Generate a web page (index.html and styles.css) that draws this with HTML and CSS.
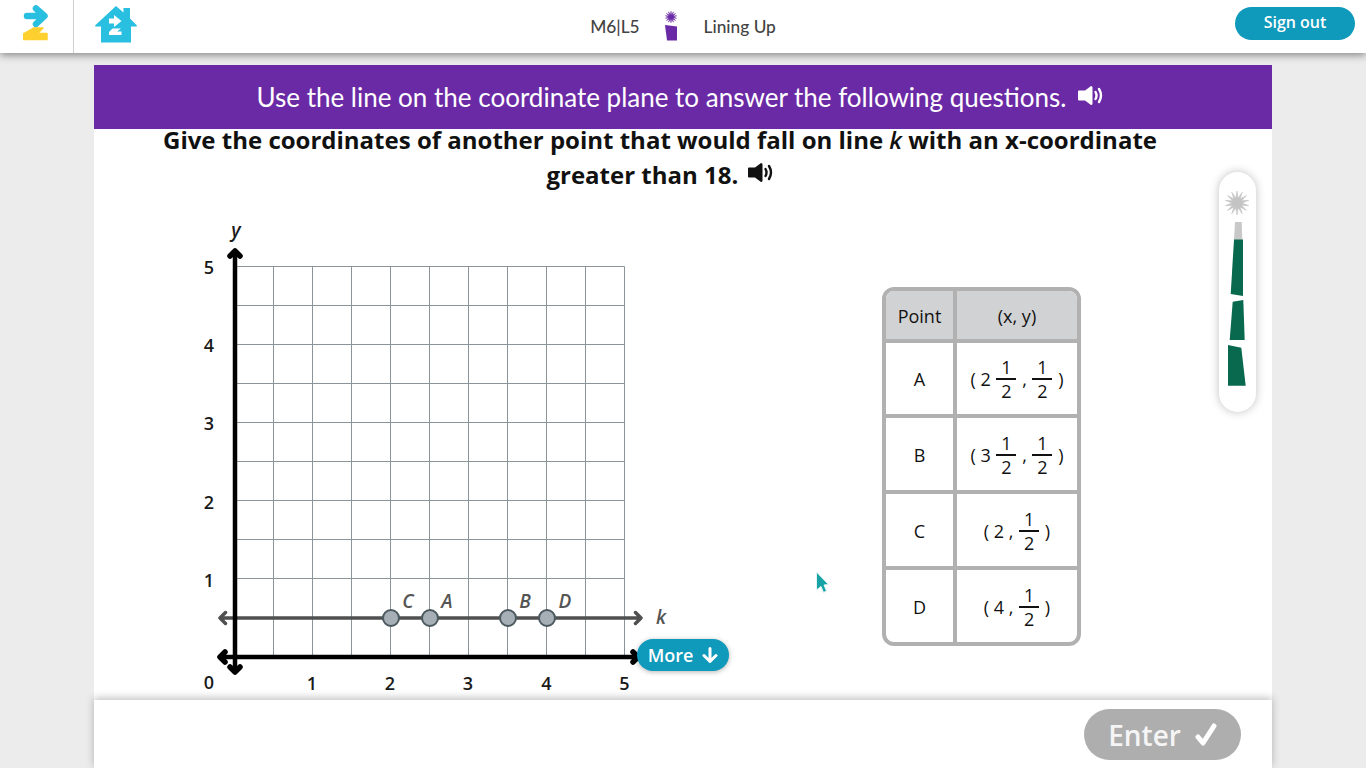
FILE: index.html
```html
<!DOCTYPE html>
<html lang="en">
  <head>
    <meta charset="UTF-8" />
    <title>Lining Up</title>
    <link rel="stylesheet" href="styles.css">
  </head>
  <body>
    <header class="topbar">
      <div class="topbar-left">
        <a class="logo-cell">
          <svg width="26" height="38" viewBox="0 0 26 38">
            <path fill="none" stroke="#29bfe0" stroke-width="6.500" stroke-linejoin="round" stroke-linecap="round" d="M13 4.500l8.500 7.500-8.500 8M4 12h16"/>
            <path fill="#fdd02f" stroke="#fdd02f" stroke-width="1.500" stroke-linejoin="round" d="M11 24h9l-5.500 5.500h9.500v6h-23.500v-5.500z"/>
          </svg>
        </a>
        <a class="home-link">
          <svg width="44" height="38" viewBox="0 0 44 38">
            <path fill="#29bfe0" d="M22 1l7.500 6.500v-4.500h6.500v10.500l7 7-.5 1h-5.500v16h-30v-16h-5.500l-.5-1z"/>
            <path fill="#fff" d="M20 10l7.500 6-7.500 6v-3.500h-5v-5h5z"/>
            <path fill="#fff" d="M18.500 23.500h8.500l-4 3h4.500v3.500h-12.500v-3z"/>
          </svg>
        </a>
      </div>
      <div class="lesson">
        <span class="lesson-code">M6|L5</span>
        <svg class="lesson-icon" width="14" height="30" viewBox="0 0 14 30">
          <polygon fill="#6b2aa5" stroke="#6b2aa5" stroke-width="1" transform="translate(7 6) scale(.48)" points="0,-12 1.110,-4.870 5.210,-10.810 3.120,-3.910 9.380,-7.480 4.500,-2.170 11.700,-2.670 5,0 11.700,2.670 4.500,2.170 9.380,7.480 3.120,3.910 5.210,10.810 1.110,4.870 0,12 -1.110,4.870 -5.210,10.810 -3.120,3.910 -9.380,7.480 -4.500,2.170 -11.700,2.670 -5,0 -11.700,-2.670 -4.500,-2.170 -9.380,-7.480 -3.120,-3.910 -5.210,-10.810 -1.110,-4.870"/>
          <path fill="#6b2aa5" d="M1 14l12 1.500v14h-10z"/>
        </svg>
        <span class="lesson-name">Lining Up</span>
      </div>
      <div class="topbar-right">
        <button type="button" class="signout">Sign out</button>
      </div>
    </header>

    <main class="sheet">
      <div class="banner">
        <span>Use the line on the coordinate plane to answer the following questions.</span>
        <svg class="speaker" width="26" height="22" viewBox="0 0 26 22">
          <path fill="currentColor" d="M1 5.500h6l6-4.500q1.500 0 1.500 1.500v16q0 1.500-1.500 1.500l-6-4.500h-6q-1 0-1-1v-8q0-1 1-1z"/>
          <path fill="none" stroke="currentColor" stroke-width="2.400" stroke-linecap="round" d="M17.500 7q2 3.500 0 7M21 4q4 6.500 0 13"/>
        </svg>
      </div>

      <div class="content">
        <h2 class="question">
          Give the coordinates of another point that would fall on line <em>k</em> with an x-coordinate greater than 18.
          <svg class="speaker" width="26" height="22" viewBox="0 0 26 22">
            <path fill="currentColor" d="M1 5.500h6l6-4.500q1.500 0 1.500 1.500v16q0 1.500-1.500 1.500l-6-4.500h-6q-1 0-1-1v-8q0-1 1-1z"/>
            <path fill="none" stroke="currentColor" stroke-width="2.400" stroke-linecap="round" d="M17.500 7q2 3.500 0 7M21 4q4 6.500 0 13"/>
          </svg>
        </h2>

        <div class="work">
          <div class="graph">
            <svg width="500" height="485" viewBox="0 0 500 485">
              <path class="grid" d="M83.500 51.500V442M122.500 51.500V442M161.500 51.500V442M200.500 51.500V442M239.500 51.500V442M278.500 51.500V442M317.500 51.500V442M356.500 51.500V442M395.500 51.500V442M434.500 51.500V442M45 51.500H434.500M45 90.500H434.500M45 129.500H434.500M45 168.500H434.500M45 207.500H434.500M45 246.500H434.500M45 285.500H434.500M45 324.500H434.500M45 363.500H434.500"/>
              <path class="line-k" d="M30 403H451M35.500 397.500l-5.500 5.500 5.500 5.500M445.500 397.500l5.500 5.500-5.500 5.500"/>
              <path class="axis" d="M45 36V457M30 442H447"/>
              <path class="axis-head" d="M40 41l5-5 5 5M40 452l5 5 5-5M35 437l-5 5 5 5M443 437l5 5-5 5"/>
              <circle class="point" cx="201" cy="403" r="8"/>
              <circle class="point" cx="240" cy="403" r="8"/>
              <circle class="point" cx="318" cy="403" r="8"/>
              <circle class="point" cx="357" cy="403" r="8"/>
              <text class="pt-label" x="218" y="393">C</text>
              <text class="pt-label" x="257" y="393">A</text>
              <text class="pt-label" x="335" y="393">B</text>
              <text class="pt-label" x="375" y="393">D</text>
              <text class="pt-label" x="471" y="409">k</text>
              <text class="var-label" x="46" y="22">y</text>
              <text class="tick" x="19" y="58.500">5</text>
              <text class="tick" x="19" y="136.500">4</text>
              <text class="tick" x="19" y="214.500">3</text>
              <text class="tick" x="19" y="294">2</text>
              <text class="tick" x="19" y="372">1</text>
              <text class="tick" x="19" y="473.500">0</text>
              <text class="tick" x="122" y="474.500">1</text>
              <text class="tick" x="200" y="474.500">2</text>
              <text class="tick" x="278" y="474.500">3</text>
              <text class="tick" x="356.500" y="474.500">4</text>
              <text class="tick" x="434.500" y="474.500">5</text>
            </svg>
            <button type="button" class="more">
              More
              <svg width="16" height="16" viewBox="0 0 16 16">
                <path fill="none" stroke="#fff" stroke-width="3" stroke-linecap="round" stroke-linejoin="round" d="M8 1.500V14M2 8.500l6 6 6-6"/>
              </svg>
            </button>
          </div>

          <table class="points">
            <tr class="head">
              <th>Point</th>
              <th>(x, y)</th>
            </tr>
            <tr>
              <td>A</td>
              <td>
                <span class="pair">( 2 <span class="frac"><i>1</i><i>2</i></span> , <span class="frac"><i>1</i><i>2</i></span> )</span>
              </td>
            </tr>
            <tr>
              <td>B</td>
              <td>
                <span class="pair">( 3 <span class="frac"><i>1</i><i>2</i></span> , <span class="frac"><i>1</i><i>2</i></span> )</span>
              </td>
            </tr>
            <tr>
              <td>C</td>
              <td>
                <span class="pair">( 2 , <span class="frac"><i>1</i><i>2</i></span> )</span>
              </td>
            </tr>
            <tr>
              <td>D</td>
              <td>
                <span class="pair">( 4 , <span class="frac"><i>1</i><i>2</i></span> )</span>
              </td>
            </tr>
          </table>
        </div>

        <aside class="progress">
          <svg width="37" height="240" viewBox="0 0 37 240">
            <polygon fill="#c4c4c4" stroke="#c4c4c4" stroke-width=".6" transform="translate(18 31)" points="0,-12 1.110,-4.870 5.210,-10.810 3.120,-3.910 9.380,-7.480 4.500,-2.170 11.700,-2.670 5,0 11.700,2.670 4.500,2.170 9.380,7.480 3.120,3.910 5.210,10.810 1.110,4.870 0,12 -1.110,4.870 -5.210,10.810 -3.120,3.910 -9.380,7.480 -4.500,2.170 -11.700,2.670 -5,0 -11.700,-2.670 -4.500,-2.170 -9.380,-7.480 -3.120,-3.910 -5.210,-10.810 -1.110,-4.870"/>
            <path fill="#c8c8c8" d="M16 50h6.700l.6 18h-8.300z"/>
            <path fill="#08694f" d="M15 67.500h9v56.500l-12.300-2z"/>
            <path fill="#08694f" d="M13.700 129.700l10.600-1.700 1.400 40h-15z"/>
            <path fill="#08694f" d="M9 173l13.300 2.700 4.400 38h-17.700z"/>
          </svg>
        </aside>

        <svg class="cursor" width="16" height="24" viewBox="0 0 16 24">
          <path fill="#17a2a6" stroke="#e4f4f4" stroke-width="1" d="M1.500 1l12 12.500-4.500.5 2.500 6-3 1.500-2.500-6-4.500 3.500z"/>
        </svg>
      </div>

      <footer class="answer-bar">
        <button type="button" class="enter">
          Enter
          <svg width="22" height="26" viewBox="0 0 22 26">
            <path fill="none" stroke="#fff" stroke-width="5" stroke-linecap="round" stroke-linejoin="round" d="M3 15l5 6 11-17"/>
          </svg>
        </button>
      </footer>
    </main>
  </body>
</html>
```

FILE: styles.css
```css
html,
body {
  height: 100%;
}

body {
  margin: 0;
  height: 768px;
  overflow: hidden;
  display: flex;
  flex-direction: column;
  background-color: #ececec;
  font-family: "Open Sans", sans-serif;
  color: #111;
}

.topbar {
  flex: 0 0 53px;
  display: grid;
  grid-template-columns: 1fr auto 1fr;
  align-items: center;
  background-color: #fff;
  box-shadow: 0 2px 8px rgba(0, 0, 0, 0.45);
  position: relative;
  z-index: 3;
}

.topbar-left {
  display: flex;
  align-items: center;
  height: 53px;
}

.logo-cell {
  display: block;
  width: 74px;
  height: 53px;
  box-sizing: border-box;
  padding: 4px 0 0 23px;
  border-right: 1px solid #cfcfcf;
}

.logo-cell svg,
.home-link svg {
  display: block;
}

.home-link {
  display: block;
  height: 38px;
  margin: -6px 0 0 20px;
}

.lesson {
  display: flex;
  align-items: center;
  margin-top: -1px;
  font-family: "Lato", sans-serif;
  font-size: 17.300px;
  font-weight: 500;
  color: #434343;
}

.lesson-icon {
  margin: 0 26px 0 24px;
}

.topbar-right {
  display: flex;
  justify-content: flex-end;
  padding-right: 11px;
}

.signout {
  width: 120px;
  height: 33px;
  margin-top: -7px;
  padding: 0 0 2px;
  border: none;
  border-radius: 17px;
  background-color: #0f99bb;
  color: #fff;
  font-family: "Open Sans", sans-serif;
  font-size: 16px;
  font-weight: 600;
}

.sheet {
  flex: 1;
  width: 1178px;
  margin: 12px auto 0 94px;
  display: flex;
  flex-direction: column;
  background-color: #fff;
  min-height: 0;
}

.banner {
  flex: 0 0 64px;
  display: flex;
  align-items: center;
  justify-content: center;
  gap: 12px;
  padding-right: 5px;
  background-color: #6b2aa5;
  color: #fff;
  font-family: "Lato", sans-serif;
  font-size: 26px;
  font-weight: 400;
}

.banner .speaker {
  margin-top: -2px;
}

.content {
  flex: 1;
  position: relative;
  min-height: 0;
}

.question {
  margin: -7px 0 0;
  padding: 0 82px 0 36px;
  text-align: center;
  font-size: 24px;
  font-weight: 700;
  line-height: 35px;
}

.question em {
  font-weight: 600;
}

.question .speaker {
  margin-left: 3px;
  vertical-align: 0;
}

.work {
  display: flex;
  align-items: flex-start;
  margin-top: 23px;
  padding-left: 96px;
}

.graph {
  position: relative;
  width: 500px;
  height: 485px;
}

.graph svg {
  display: block;
}

.grid {
  fill: none;
  stroke: #8a9499;
  stroke-width: 1;
}

.line-k {
  fill: none;
  stroke: #505050;
  stroke-width: 3.500;
  stroke-linecap: round;
  stroke-linejoin: round;
}

.axis,
.axis-head {
  fill: none;
  stroke: #000;
  stroke-width: 4.500;
  stroke-linecap: round;
  stroke-linejoin: round;
}

.axis-head {
  stroke-width: 5.500;
}

.point {
  fill: #a5afb5;
  stroke: #4c5a60;
  stroke-width: 2;
}

.tick {
  font-size: 18px;
  font-weight: 600;
  text-anchor: middle;
  fill: #1a1a1a;
}

.pt-label,
.var-label {
  font-size: 19px;
  font-weight: 600;
  font-style: italic;
  text-anchor: middle;
  fill: #555;
}

.var-label {
  fill: #1a1a1a;
}

.more {
  position: absolute;
  left: 447px;
  top: 424px;
  width: 92px;
  height: 32px;
  display: flex;
  align-items: center;
  justify-content: center;
  gap: 9px;
  padding: 0;
  border: none;
  border-radius: 16px;
  background-color: #0f99bb;
  box-shadow: 0 1px 5px rgba(0, 0, 0, 0.3);
  color: #fff;
  font-family: "Open Sans", sans-serif;
  font-size: 18px;
  font-weight: 600;
}

.points {
  margin: 72px 0 0 192px;
  width: 199px;
  box-sizing: border-box;
  border: 4px solid #b1b1b1;
  border-radius: 12px;
  border-spacing: 0;
  overflow: hidden;
  font-size: 18px;
}

.points th,
.points td {
  padding: 0;
  text-align: center;
  font-weight: 400;
  border-top: 4px solid #b1b1b1;
  border-left: 4px solid #b1b1b1;
}

.points th {
  border-top: none;
  height: 48px;
  padding-top: 2px;
  box-sizing: border-box;
  background-color: #d1d2d3;
}

.points td {
  height: 70px;
  padding-top: 2px;
}

.head + tr td {
  height: 71px;
  padding-top: 0;
}

.points th:first-child,
.points td:first-child {
  width: 67px;
  border-left: none;
}

.pair {
  display: inline-flex;
  align-items: center;
  white-space: pre;
}

.frac {
  display: inline-flex;
  flex-direction: column;
  align-items: center;
  width: 20px;
  margin: 0 1px;
}

.frac i {
  font-style: normal;
  line-height: 23px;
}

.frac i:first-child {
  width: 100%;
  padding-top: 2px;
  line-height: 21px;
  border-bottom: 2px solid #111;
}

.progress {
  position: absolute;
  left: 1125px;
  top: 43px;
  width: 37px;
  height: 240px;
  border-radius: 19px;
  background-color: #fff;
  box-shadow: 0 0 10px rgba(0, 0, 0, 0.25);
}

.progress svg {
  display: block;
}

.cursor {
  position: absolute;
  left: 721px;
  top: 442px;
}

.answer-bar {
  flex: 0 0 68px;
  display: flex;
  align-items: center;
  justify-content: flex-end;
  padding-right: 31px;
  background-color: #fff;
  box-shadow: 0 -2px 8px rgba(0, 0, 0, 0.25);
  position: relative;
  z-index: 2;
}

.enter {
  width: 157px;
  height: 51px;
  margin-top: 1px;
  display: flex;
  align-items: center;
  justify-content: center;
  gap: 14px;
  padding: 0;
  border: none;
  border-radius: 26px;
  background-color: #aeaeae;
  color: #f5f5f5;
  font-family: "Open Sans", sans-serif;
  font-size: 28px;
  font-weight: 600;
}
```
